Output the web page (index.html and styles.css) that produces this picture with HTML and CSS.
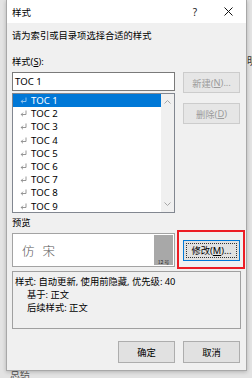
FILE: index.html
```html
<!DOCTYPE html>
<html lang="zh-CN">
<head>
<meta charset="utf-8">
<title>样式</title>
<link rel="stylesheet" href="styles.css">
</head>
<body>
<div class="desk">
  <span class="bg-char bg-ming">明</span>
  <span class="bg-char bg-sum">总结</span>
  <div class="dialog">
    <div class="titlebar">
      <span class="title">样式</span>
      <span class="tb-btn help">?</span>
      <span class="tb-btn close">
        <svg width="9" height="9" viewBox="0 0 9 9"><path d="M0.5 0.5 L8.5 8.5 M8.5 0.5 L0.5 8.5" stroke="#111" stroke-width="1" fill="none"/></svg>
      </span>
    </div>
    <div class="body">
      <div class="intro">请为索引或目录项选择合适的样式</div>
      <div class="label">样式(<u>S</u>):</div>
      <div class="main">
        <div class="leftcol">
          <div class="input">TOC 1</div>
          <div class="list">
            <div class="rows">
              <div class="row sel"><svg class="ret" width="7" height="7" viewBox="0 0 7 7"><path d="M6 0.5 V4.5 H1.2 M3 2.7 L1.2 4.5 L3 6.3" fill="none" stroke-width="0.9"/></svg>TOC 1</div>
              <div class="row"><svg class="ret" width="7" height="7" viewBox="0 0 7 7"><path d="M6 0.5 V4.5 H1.2 M3 2.7 L1.2 4.5 L3 6.3" fill="none" stroke-width="0.9"/></svg>TOC 2</div>
              <div class="row"><svg class="ret" width="7" height="7" viewBox="0 0 7 7"><path d="M6 0.5 V4.5 H1.2 M3 2.7 L1.2 4.5 L3 6.3" fill="none" stroke-width="0.9"/></svg>TOC 3</div>
              <div class="row"><svg class="ret" width="7" height="7" viewBox="0 0 7 7"><path d="M6 0.5 V4.5 H1.2 M3 2.7 L1.2 4.5 L3 6.3" fill="none" stroke-width="0.9"/></svg>TOC 4</div>
              <div class="row"><svg class="ret" width="7" height="7" viewBox="0 0 7 7"><path d="M6 0.5 V4.5 H1.2 M3 2.7 L1.2 4.5 L3 6.3" fill="none" stroke-width="0.9"/></svg>TOC 5</div>
              <div class="row"><svg class="ret" width="7" height="7" viewBox="0 0 7 7"><path d="M6 0.5 V4.5 H1.2 M3 2.7 L1.2 4.5 L3 6.3" fill="none" stroke-width="0.9"/></svg>TOC 6</div>
              <div class="row"><svg class="ret" width="7" height="7" viewBox="0 0 7 7"><path d="M6 0.5 V4.5 H1.2 M3 2.7 L1.2 4.5 L3 6.3" fill="none" stroke-width="0.9"/></svg>TOC 7</div>
              <div class="row"><svg class="ret" width="7" height="7" viewBox="0 0 7 7"><path d="M6 0.5 V4.5 H1.2 M3 2.7 L1.2 4.5 L3 6.3" fill="none" stroke-width="0.9"/></svg>TOC 8</div>
              <div class="row"><svg class="ret" width="7" height="7" viewBox="0 0 7 7"><path d="M6 0.5 V4.5 H1.2 M3 2.7 L1.2 4.5 L3 6.3" fill="none" stroke-width="0.9"/></svg>TOC 9</div>
            </div>
            <div class="scroll">
              <svg width="7" height="4" viewBox="0 0 7 4"><path d="M0.5 3.5 L3.5 0.5 L6.5 3.5" fill="none" stroke="#a6a6a6" stroke-width="1"/></svg>
              <svg width="7" height="4" viewBox="0 0 7 4"><path d="M0.5 0.5 L3.5 3.5 L6.5 0.5" fill="none" stroke="#a6a6a6" stroke-width="1"/></svg>
            </div>
          </div>
        </div>
        <div class="rightcol">
          <div class="btn disabled">新建(<u>N</u>)...</div>
          <div class="btn disabled second">删除(<u>D</u>)</div>
        </div>
      </div>
      <div class="label plabel">预览</div>
      <div class="prevrow">
        <div class="preview">
          <div class="pv-text">仿<span class="gap"></span>宋</div>
          <div class="pv-size"><span>12 号</span></div>
        </div>
        <div class="btn modify"><span class="focus">修改(<u>M</u>)...</span></div>
        <div class="highlight"></div>
      </div>
      <div class="desc">
        <div>样式: 自动更新, 使用前隐藏, 优先级: 40</div>
        <div class="ind">基于: 正文</div>
        <div class="ind">后续样式: 正文</div>
      </div>
      <div class="actions">
        <div class="btn">确定</div>
        <div class="btn">取消</div>
      </div>
    </div>
  </div>
</div>
</body>
</html>
```
FILE: styles.css
```css
html, body {
  margin: 0;
  padding: 0;
}
body {
  width: 252px;
  height: 378px;
  overflow: hidden;
  background: #e3e3e3;
  font-family: "Noto Sans", "Noto Sans CJK SC", sans-serif;
  font-size: 9.3px;
  color: #000;
}
.desk {
  position: relative;
  width: 252px;
  height: 378px;
  overflow: hidden;
}
.bg-char {
  position: absolute;
  font-family: "Noto Sans CJK SC", sans-serif;
  font-size: 10px;
  line-height: 12px;
  color: #333;
}
.bg-ming { left: 247px; top: 55px; }
.bg-sum { left: 10px; top: 368px; color: #555; }

.dialog {
  position: absolute;
  left: 6px;
  top: 0;
  width: 241px;
  height: 371px;
  box-sizing: border-box;
  border: 1px solid #a8a8a8;
  border-top: none;
  background: #f0f0f0;
  box-shadow: 0 1px 4px rgba(0,0,0,0.22);
  display: flex;
  flex-direction: column;
}
.titlebar {
  height: 23px;
  background: #fff;
  display: flex;
  align-items: center;
  flex: none;
}
.title {
  flex: 1;
  padding-left: 5px;
  font-family: "Noto Sans CJK SC", sans-serif;
  font-size: 9.5px;
}
.tb-btn {
  height: 23px;
  display: flex;
  align-items: center;
  justify-content: center;
}
.help {
  width: 30px;
  font-size: 10px;
  color: #222;
}
.close {
  width: 36px;
}
.body {
  position: relative;
  padding: 0 6px 0 5px;
  display: flex;
  flex-direction: column;
}
.intro {
  margin-top: 6px;
  height: 14px;
  line-height: 14px;
  white-space: nowrap;
}
.label {
  margin-top: 12px;
  height: 14px;
  line-height: 14px;
}
u { text-decoration: underline; text-underline-offset: 1px; }
.main {
  margin-top: 3px;
  display: grid;
  grid-template-columns: 163px 57px;
  column-gap: 8px;
}
.leftcol {
  display: flex;
  flex-direction: column;
  gap: 2px;
}
.input {
  height: 19px;
  box-sizing: border-box;
  border: 1px solid #7a7a7a;
  background: #fff;
  padding-left: 2px;
  line-height: 17px;
  font-size: 9.6px;
}
.list {
  height: 120px;
  box-sizing: border-box;
  border: 1px solid #828790;
  background: #fff;
  display: grid;
  grid-template-columns: 1fr 13px;
  overflow: hidden;
}
.rows {
  overflow: hidden;
}
.row {
  height: 13.2px;
  line-height: 13.2px;
  padding-left: 7px;
  display: flex;
  align-items: center;
  font-size: 9.6px;
  color: #000;
}
.row .ret {
  margin-right: 4px;
  stroke: #8a8a8a;
  flex: none;
}
.row.sel {
  background: #0078d7;
  color: #fff;
}
.row.sel .ret {
  stroke: #9fc9ee;
}
.scroll {
  background: #f0f0f0;
  display: flex;
  flex-direction: column;
  justify-content: space-between;
  align-items: center;
  padding: 6px 0 6px;
}
.rightcol {
  display: flex;
  flex-direction: column;
}
.btn {
  height: 21px;
  box-sizing: border-box;
  border: 1px solid #adadad;
  background: #e1e1e1;
  display: flex;
  align-items: center;
  justify-content: center;
  white-space: nowrap;
  font-size: 9.3px;
}
.btn.disabled {
  border-color: #cccccc;
  background: #e6e6e6;
  color: #9c9c9c;
}
.btn.second {
  margin-top: 10px;
}
.plabel {
  margin-top: 3px;
}
.prevrow {
  position: relative;
  margin-top: 3px;
  display: grid;
  grid-template-columns: 163px 57px;
  column-gap: 8px;
  align-items: center;
}
.preview {
  height: 34px;
  box-sizing: border-box;
  border: 1px solid #a3a3a3;
  background: #fff;
  display: flex;
}
.pv-text {
  flex: 1;
  padding-left: 9px;
  display: flex;
  align-items: center;
  font-family: "Noto Sans CJK SC", sans-serif;
  font-weight: 300;
  font-size: 12.5px;
  color: #555;
}
.gap {
  display: inline-block;
  width: 8px;
}
.pv-size {
  width: 19px;
  margin: 1px 1px 1px 0;
  background: #a8a8a8;
  display: flex;
  align-items: flex-end;
  justify-content: center;
  font-size: 5px;
  line-height: 7px;
  color: #222;
  font-family: "Noto Sans CJK SC", sans-serif;
  white-space: nowrap;
}
.btn.modify {
  height: 21px;
  border: 1px solid #0078d7;
  padding: 2px;
}
.btn.modify .focus {
  flex: 1;
  align-self: stretch;
  border: 1px dotted #333;
  display: flex;
  align-items: center;
  justify-content: center;
}
.highlight {
  position: absolute;
  left: 165px;
  top: -3px;
  width: 68px;
  height: 39px;
  box-sizing: border-box;
  border: 2px solid #ec1c24;
  pointer-events: none;
}
.desc {
  margin-top: 4px;
  margin-right: -1px;
  height: 58px;
  box-sizing: border-box;
  border: 1px solid #a0a0a0;
  padding: 3px 0 0 2px;
  line-height: 13px;
  white-space: nowrap;
}
.desc .ind {
  padding-left: 12px;
}
.actions {
  margin-top: 12px;
  display: flex;
  justify-content: flex-end;
  gap: 8px;
}
.actions .btn {
  width: 57px;
  height: 22px;
}
```
